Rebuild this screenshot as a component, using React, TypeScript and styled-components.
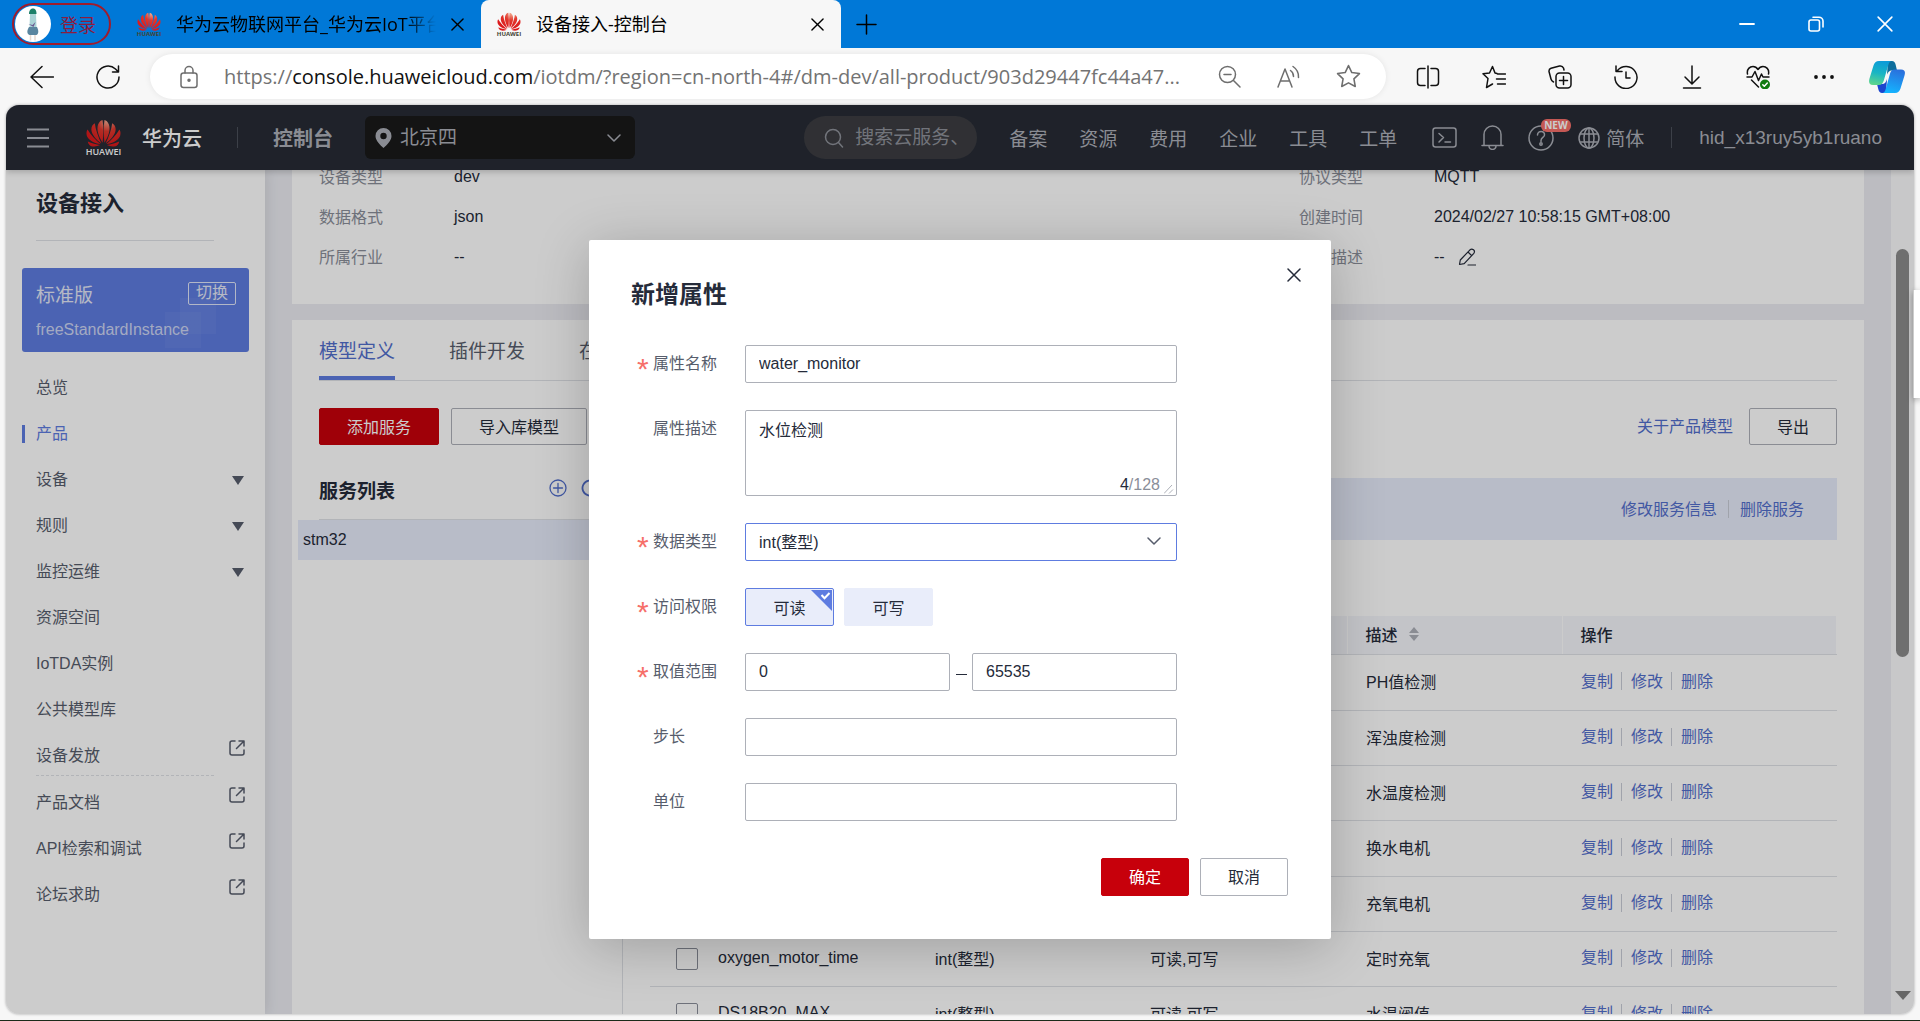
import React, { useState } from "react";
import styled, { createGlobalStyle, css } from "styled-components";

const sans = `"Liberation Sans", "Noto Sans CJK SC", sans-serif`;
const chrome = `"Open Sans", "Noto Sans CJK SC", sans-serif`;

const Global = createGlobalStyle`
  * { box-sizing: border-box; }
  body { margin: 0; overflow: hidden; font-family: ${sans}; font-size: 16px; color: #252b3a; }
  button, input, select, textarea { font: inherit; color: inherit; margin: 0; }
  button { cursor: pointer; padding: 0; border: 0; background: none; }
  a { text-decoration: none; color: inherit; }
  svg { display: block; flex: none; }
`;

/* ---------- browser window ---------- */

const Window = styled.div`
  height: 100vh;
  display: flex;
  flex-direction: column;
  background: #f7f7f7;
  border-bottom: 1px solid #1c2b1a;
  position: relative;
`;

const TabStrip = styled.div`
  height: 48px;
  flex: none;
  display: flex;
  align-items: center;
  padding: 0 27px 0 12px;
  background: #0078d7;
  font-family: ${chrome};
  font-size: 18px;
  color: #000;
`;

const SignIn = styled.button`
  width: 99px;
  height: 42px;
  margin-right: 10px;
  display: flex;
  align-items: center;
  gap: 9px;
  padding-left: 1px;
  border: 2px solid #a01c2c;
  border-radius: 21px;
  color: #8e1b3c;
`;

const Tab = styled.div<{ $active?: boolean }>`
  width: 360px;
  height: 48px;
  display: flex;
  align-items: center;
  gap: 15px;
  padding: 0 17px 0 16px;
  border-radius: 8px 8px 0 0;
  ${(p) => p.$active && css`background: #f7f7f7;`}
`;

const TabTitle = styled.span<{ $fade?: boolean }>`
  flex: 1;
  overflow: hidden;
  white-space: nowrap;
  line-height: 24px;
  ${(p) => p.$fade && css`mask-image: linear-gradient(90deg, #000 88%, transparent);`}
`;

const PlainButton = styled.button`
  display: flex;
  align-items: center;
  justify-content: center;
`;

const WindowButtons = styled.div`
  margin-left: auto;
  display: flex;
  align-items: center;
  gap: 53px;
  color: #fff;
`;

const NewTab = styled(PlainButton)`
  margin-left: 15px;
`;

const Toolbar = styled.div`
  height: 57px;
  flex: none;
  display: flex;
  align-items: center;
  padding: 0 15px 0 30px;
  gap: 42px;
  color: #111;
`;

const AddressBar = styled.div`
  flex: 1;
  min-width: 0;
  height: 45px;
  margin: 0 -12px;
  display: flex;
  align-items: center;
  gap: 35px;
  padding: 0 25px 0 30px;
  border-radius: 23px;
  background: #fff;
  box-shadow: 0 0 6px rgba(0, 0, 0, 0.08);
  color: #6e6e6e;
`;

const Url = styled.div`
  flex: 1;
  min-width: 0;
  margin-left: -9px;
  overflow: hidden;
  white-space: nowrap;
  font-family: ${chrome};
  font-size: 20px;
  line-height: 28px;
  color: #737373;
  b { font-weight: 400; color: #111; }
`;

const ToolIcons = styled.div`
  display: flex;
  align-items: center;
  gap: 42px;
`;

const Copilot = styled(PlainButton)`
  margin-left: -9px;
`;

const Frame = styled.div`
  flex: 1;
  min-height: 0;
  margin: 0 6px 6px;
  display: flex;
  flex-direction: column;
  position: relative;
  overflow: hidden;
  border-radius: 13px;
  background: #ebecf2;
  box-shadow: 0 0 3px rgba(0, 0, 0, 0.35);
`;

const EdgePanel = styled.div`
  position: absolute;
  right: 0;
  top: 290px;
  width: 7px;
  height: 108px;
  background: #fff;
  box-shadow: 0 2px 6px rgba(0, 0, 0, 0.35);
`;

/* ---------- console header ---------- */

const Header = styled.header`
  height: 65px;
  flex: none;
  display: flex;
  align-items: center;
  padding: 0 32px 0 21px;
  background: #272b35;
  color: #adb0b8;
  font-size: 19px;
  white-space: nowrap;
  z-index: 1;
  box-shadow: 0 2px 6px rgba(0, 0, 0, 0.2);
`;

const Brand = styled.a`
  display: flex;
  align-items: center;
  gap: 21px;
  margin-left: 37px;
  color: #fff;
  font-size: 20px;
  font-weight: 500;
`;

const LogoBox = styled.span`
  width: 35px;
  display: flex;
  flex-direction: column;
  align-items: center;
  font: 600 9px/10px "Open Sans", sans-serif;
`;

const Rule = styled.i<{ $gap: number }>`
  width: 1px;
  height: 21px;
  margin: 0 ${(p) => p.$gap}px;
  background: #4c505b;
`;

const ConsoleLink = styled.a`
  font-size: 20px;
  font-weight: 700;
`;

const Region = styled.label`
  position: relative;
  width: 270px;
  height: 43px;
  margin-left: 32px;
  display: flex;
  align-items: center;
  gap: 8px;
  padding: 0 14px 0 10px;
  border-radius: 6px;
  background: #191919;
  select {
    flex: 1;
    appearance: none;
    border: 0;
    outline: 0;
    padding: 0;
    background: transparent;
  }
`;

const Search = styled.label`
  width: 173px;
  height: 43px;
  margin-left: auto;
  display: flex;
  align-items: center;
  gap: 11px;
  padding: 0 20px;
  border-radius: 22px;
  background: #3c3d42;
  color: #8f929a;
  input {
    width: 104px;
    border: 0;
    padding: 0;
    outline: 0;
    background: transparent;
  }
  input::placeholder { color: #8f929a; opacity: 1; }
`;

const TopNav = styled.nav`
  display: flex;
  gap: 32px;
  margin: 0 35px 0 32px;
`;

const HeaderIcons = styled.div`
  display: flex;
  align-items: center;
  gap: 24px;
`;

const Help = styled(PlainButton)`
  position: relative;
`;

const NewBadge = styled.span`
  position: absolute;
  left: 13px;
  top: -6px;
  padding: 0 3px;
  border-radius: 6px;
  background: #f66f6a;
  color: #fff;
  font: 700 10px/13px "Open Sans", sans-serif;
`;

const Lang = styled.button`
  display: flex;
  align-items: center;
  gap: 6px;
`;

/* ---------- console body ---------- */

const Body = styled.div`
  flex: 1;
  min-height: 0;
  display: flex;
`;

const Sidebar = styled.aside`
  width: 259px;
  flex: none;
  padding: 18px 16px 0;
  background: #fff;
  box-shadow: 0 0 14px rgba(0, 0, 0, 0.12);
`;

const SideTitle = styled.h1`
  margin: 0 35px 27px 14px;
  padding-bottom: 20px;
  border-bottom: 1px solid #dfe1e6;
  font-size: 22px;
  line-height: 32px;
  font-weight: 700;
`;

const Instance = styled.section`
  height: 84px;
  padding: 11px 13px 0 14px;
  border-radius: 3px;
  background:
    linear-gradient(rgba(255, 255, 255, 0.04), rgba(255, 255, 255, 0.04)) 158px 30px / 36px 36px no-repeat,
    linear-gradient(rgba(255, 255, 255, 0.04), rgba(255, 255, 255, 0.04)) 143px 44px / 36px 36px no-repeat,
    #5e7ce0;
  color: #e4e8f7;
`;

const InstanceTop = styled.div`
  display: flex;
  justify-content: space-between;
  align-items: center;
  height: 28px;
  margin-bottom: 11px;
  font-size: 19px;
  button {
    width: 48px;
    height: 23px;
    border: 1px solid #dfe5f9;
    border-radius: 2px;
    font-size: 16px;
    line-height: 20px;
  }
`;

const InstanceName = styled.div`
  line-height: 24px;
  color: #cdd5f3;
`;

const Menu = styled.nav`
  margin-top: 13px;
`;

const MenuItem = styled.a<{ $active?: boolean }>`
  height: 46px;
  display: flex;
  align-items: center;
  justify-content: space-between;
  padding-right: 4px;
  color: ${(p) => (p.$active ? "#5e7ce0" : "#575d6c")};
  span {
    padding-left: 11px;
    border-left: 3px solid ${(p) => (p.$active ? "#5e7ce0" : "transparent")};
    line-height: 18px;
  }
`;

const ExternalMark = styled.i`
  padding-bottom: 17px;
`;

const Caret = styled.i`
  margin-right: 1px;
  border: solid transparent;
  border-width: 9px 6px 0;
  border-top-color: #575d6c;
`;

const MenuBreak = styled.hr`
  margin: -4px 35px 4px 14px;
  border: 0;
  border-top: 1px dashed #dfe1e6;
`;

const Main = styled.main`
  flex: 1;
  min-width: 0;
  display: flex;
  flex-direction: column;
  gap: 16px;
  padding: 0 27px;
  overflow: hidden;
`;

const Card = styled.section`
  flex: none;
  padding: 0 27px;
  background: #fff;
`;

const Facts = styled(Card).attrs({ as: "dl" })`
  margin: -13px 0 0;
  padding-bottom: 27px;
  display: grid;
  grid-template-columns: 135px 845px 135px 1fr;
  grid-auto-rows: 40px;
  align-items: center;
  dt { padding-bottom: 2px; color: #8a8e99; }
  dd { margin: 0; display: flex; align-items: center; gap: 13px; }
`;

const ModelTabs = styled.div`
  height: 61px;
  display: flex;
  gap: 54px;
  border-bottom: 1px solid #dfe1e6;
`;

const ModelTab = styled.button<{ $active?: boolean }>`
  border-bottom: 4px solid ${(p) => (p.$active ? "#5e7ce0" : "transparent")};
  padding-top: 8px;
  font-size: 19px;
  line-height: 28px;
  color: ${(p) => (p.$active ? "#526ecc" : "#575d6c")};
`;

const Button = styled.button<{ $primary?: boolean }>`
  height: 37px;
  padding: 0 27px 2px;
  border: 1px solid ${(p) => (p.$primary ? "#c7000b" : "#adb0b8")};
  border-radius: 2px;
  background: ${(p) => (p.$primary ? "#c7000b" : "transparent")};
  color: ${(p) => (p.$primary ? "#fff" : "#252b3a")};
`;

const ModelActions = styled.div`
  display: flex;
  align-items: center;
  gap: 12px;
  margin: 27px 0 33px;
`;

const Link = styled.a`
  padding-bottom: 3px;
  color: #526ecc;
`;

const DocLink = styled(Link)`
  margin: 0 4px 0 auto;
`;

const Split = styled.div`
  display: flex;
`;

const Services = styled.div`
  width: 304px;
  flex: none;
  border-right: 1px solid #dfe1e6;
`;

const ServicesHead = styled.div`
  height: 42px;
  display: flex;
  align-items: flex-start;
  gap: 14px;
  padding: 1px 23px 0 0;
  border-bottom: 1px solid #dfe1e6;
  color: #526ecc;
  h2 {
    flex: 1;
    margin: 0;
    color: #252b3a;
    font-size: 19px;
    line-height: 26px;
    font-weight: 700;
  }
`;

const ServiceRow = styled.button`
  display: block;
  width: 325px;
  height: 40px;
  margin-left: -21px;
  padding-left: 5px;
  background: #e7ebfa;
  text-align: left;
`;

const Detail = styled.div`
  flex: 1;
  min-width: 0;
  padding-left: 27px;
`;

const ServiceBand = styled.div`
  height: 62px;
  display: flex;
  align-items: center;
  justify-content: flex-end;
  gap: 11px;
  padding-right: 33px;
  background: #e7ebfa;
`;

const Bar = styled.i`
  width: 1px;
  height: 18px;
  background: #c9ccd6;
`;

const Properties = styled.table`
  width: 100%;
  margin-top: 76px;
  table-layout: fixed;
  border-collapse: collapse;
  text-align: left;
  col:nth-child(1) { width: 50px; }
  col:nth-child(2) { width: 217px; }
  col:nth-child(3), col:nth-child(4), col:nth-child(5) { width: 215px; }
  th, td { height: 55px; padding: 0 18px 2px; border-bottom: 1px solid #dfe1e6; font-weight: 400; }
  th { height: 38px; background: #f4f5fb; font-weight: 500; border-right: 1px solid #fff; }
  td:first-child { padding: 0 0 0 26px; }
  td:nth-child(n + 5) { padding-left: 19px; }
  tbody tr:nth-child(3n + 1) td { height: 56px; }
`;

const Check = styled.input`
  display: block;
  appearance: none;
  width: 22px;
  height: 22px;
  margin: 0;
  border: 1px solid #8a8e99;
  border-radius: 2px;
`;

const Sortable = styled.span`
  display: flex;
  align-items: center;
  gap: 11px;
`;

const Ops = styled.div`
  display: flex;
  align-items: center;
  gap: 8px;
  ${Bar} { margin: 0 1px 0 0; }
`;

const Track = styled.div`
  width: 23px;
  flex: none;
  display: flex;
  flex-direction: column;
  align-items: center;
  padding: 79px 0 14px;
  background: #fbfbfc;
`;

const Thumb = styled.div`
  width: 13px;
  flex: 0 0 408px;
  border-radius: 7px;
  background: #8b8b8b;
`;

const TrackArrow = styled.i`
  margin-top: auto;
  border: solid transparent;
  border-width: 9px 8px 0;
  border-top-color: #808080;
`;

/* ---------- dialog ---------- */

const Overlay = styled.div`
  position: absolute;
  inset: 0;
  z-index: 2;
  padding-top: 135px;
  background: rgba(0, 0, 0, 0.2);
`;

const Dialog = styled.div`
  width: 742px;
  margin: 0 auto;
  padding: 28px 43px 43px 42px;
  border-radius: 2px;
  background: #fff;
  box-shadow: 0 8px 54px rgba(0, 0, 0, 0.22);
`;

const DialogHead = styled.div`
  display: flex;
  justify-content: space-between;
  align-items: flex-start;
  height: 77px;
  h2 {
    margin: 12px 0 0;
    font-size: 24px;
    line-height: 30px;
    font-weight: 700;
  }
  button { margin-right: -13px; }
`;

const Form = styled.form`
  display: flex;
  flex-direction: column;
  gap: 27px;
  padding-left: 6px;
`;

const FieldRow = styled.div`
  display: grid;
  grid-template-columns: 16px 92px 432px;
`;

const Star = styled.span`
  color: #f66f6a;
  font: 400 30px/48px "Liberation Sans", sans-serif;
  height: 38px;
`;

const FieldLabel = styled.label`
  grid-column: 2;
  line-height: 38px;
  color: #575d6c;
`;

const box = css`
  border: 1px solid #adb0b8;
  border-radius: 2px;
  background: #fff;
  outline: 0;
  padding: 0 13px;
`;

const TextBox = styled.input`
  ${box}
  width: 100%;
  min-width: 0;
  height: 38px;
`;

const AreaWrap = styled.div`
  position: relative;
  height: 86px;
`;

const Area = styled.textarea`
  ${box}
  display: block;
  width: 100%;
  height: 86px;
  padding: 8px 13px;
  line-height: 24px;
  resize: none;
`;

const Counter = styled.span`
  position: absolute;
  right: 17px;
  bottom: 0;
  line-height: 22px;
  color: #8a8e99;
  b { font-weight: 400; color: #252b3a; }
`;

const Grip = styled.svg`
  position: absolute;
  right: 3px;
  bottom: 2px;
`;

const SelectWrap = styled.div`
  position: relative;
  svg { position: absolute; right: 16px; top: 14px; pointer-events: none; color: #575d6c; }
`;

const Select = styled.select`
  ${box}
  appearance: none;
  width: 100%;
  height: 38px;
  border-color: #5e7ce0;
`;

const Chips = styled.div`
  display: flex;
  gap: 10px;
`;

const Chip = styled.label`
  position: relative;
  width: 89px;
  height: 38px;
  display: flex;
  align-items: center;
  justify-content: center;
  border: 1px solid #e9edfa;
  border-radius: 2px;
  background: #e9edfa;
  input { position: absolute; inset: 0; width: 100%; height: 100%; opacity: 0; }
  svg { position: absolute; right: 1px; top: 1px; display: none; }
  &:has(input:checked) { border-color: #5e7ce0; }
  &:has(input:checked) svg { display: block; }
`;

const RangeRow = styled.div`
  display: grid;
  grid-template-columns: 1fr 22px 1fr;
  align-items: center;
  i { justify-self: center; width: 11px; height: 1px; margin-top: 5px; background: #252b3a; }
`;

const DialogFoot = styled.div`
  display: flex;
  justify-content: flex-end;
  gap: 11px;
  margin-top: 37px;
  button { height: 38px; }
`;

/* ---------- drawings ---------- */

type IconProps = { w: number; h?: number; box?: string; sw?: number; children: React.ReactNode };
const Icon = ({ w, h = w, box: vb = "0 0 24 24", sw = 1.5, children }: IconProps) => (
  <svg width={w} height={h} viewBox={vb} fill="none" stroke="currentColor" strokeWidth={sw} strokeLinecap="round" strokeLinejoin="round" aria-hidden>
    {children}
  </svg>
);

const petals = [
  "M17 24.5C13 18 10.5 11 12.4 5.6 13.400 2.800 15.400 1.200 17 1 18.200 8 18 16 17 24.500Z",
  "M19 24.500C23 18 25.500 11 23.600 5.600 22.600 2.800 20.600 1.200 19 1 17.800 8 18 16 19 24.500Z",
  "M15.800 25C10.500 21.500 5.500 16 5.400 10.500 5.400 7.500 7 5.300 9 4.300 9.800 11 12.500 18.500 15.800 25Z",
  "M20.200 25C25.500 21.500 30.500 16 30.600 10.500 30.600 7.500 29 5.300 27 4.300 26.200 11 23.500 18.500 20.200 25Z",
  "M15 26C9 25.300 2.500 22 .8 17.500 0 15 .4 12.500 1.500 11 5 17 10 22 15 26Z",
  "M21 26C27 25.300 33.500 22 35.200 17.500 36 15 35.600 12.500 34.500 11 31 17 26 22 21 26Z",
  "M14.600 27C10.500 29 5.500 29 3.500 26.800 2.400 25.700 1.800 24.500 1.800 23.300 6 25.300 10.500 26.600 14.600 27Z",
  "M21.400 27C25.500 29 30.500 29 32.500 26.800 33.600 25.700 34.200 24.500 34.200 23.300 30 25.300 25.500 26.600 21.400 27Z",
];

const Flower = ({ w, h, id }: { w: number; h: number; id: string }) => (
  <svg width={w} height={h} viewBox="0 0 36 29" aria-hidden>
    <defs>
      <radialGradient id={id} gradientUnits="userSpaceOnUse" cx="22" cy="2" r="24">
        <stop offset="0" stopColor="#f3b095" />
        <stop offset="0.450" stopColor="#e2392e" />
        <stop offset="1" stopColor="#dc1a1c" />
      </radialGradient>
    </defs>
    {petals.map((d) => (
      <path key={d} d={d} fill={`url(#${id})`} />
    ))}
  </svg>
);

const FavBox = styled.span`
  width: 24px;
  display: flex;
  flex-direction: column;
  align-items: center;
  font: 700 6px/6px "Open Sans", sans-serif;
  color: #443;
`;

const Favicon = ({ id }: { id: string }) => (
  <FavBox>
    <Flower w={24} h={19} id={id} />
    HUAWEI
  </FavBox>
);

const Avatar = () => (
  <svg width="36" height="36" viewBox="0 0 36 36" aria-hidden>
    <circle cx="18" cy="18" r="18" fill="#fff" />
    <path d="M14 8c0-4 2-5.500 4-5.500S21.500 4 21.500 8z" fill="#1d8069" />
    <path d="M15 8h6l.5 13h-7z" fill="#a9d3d6" />
    <path d="M13.500 18l4 1 3-3-2 5z" fill="#6b5a92" />
    <path d="M14 21h8c2 4 1.500 7-.5 8h-7c-2.500-1-3-4-.5-8z" fill="#5a86a0" />
    <path d="M15.500 29v5.500M20 29v5.500" stroke="#e8d9cf" strokeWidth="1.500" />
  </svg>
);

const Cross = ({ size, sw = 1.5 }: { size: number; sw?: number }) => (
  <Icon w={size} box="0 0 14 14" sw={sw}><path d="M1 1l12 12M13 1L1 13" /></Icon>
);

const Chevron = () => <Icon w={14} h={8} box="0 0 14 8" sw={1.5}><path d="M1 1l6 6 6-6" /></Icon>;

const External = () => (
  <Icon w={16} box="0 0 16 16" sw={1.5}>
    <path d="M6 1H3a2 2 0 0 0-2 2v10a2 2 0 0 0 2 2h10a2 2 0 0 0 2-2v-3M10 1h5v5M15 1L7.500 8.500" />
  </Icon>
);

const star = "M12 1.500l3.200 6.700 7.300 1-5.300 5.100 1.300 7.300L12 18.100l-6.500 3.500 1.300-7.300L1.500 9.200l7.300-1z";

const CopilotMark = () => (
  <svg width="36" height="32" viewBox="0 0 36 32" aria-hidden>
    <defs>
      <linearGradient id="cpA" x1="0.500" y1="0" x2="0.300" y2="1">
        <stop offset="0" stopColor="#0c9bd8" /><stop offset="0.500" stopColor="#19b5c4" /><stop offset="1" stopColor="#5fd68c" />
      </linearGradient>
      <linearGradient id="cpB" x1="0.700" y1="0" x2="0.400" y2="1">
        <stop offset="0" stopColor="#2a6fdc" /><stop offset="1" stopColor="#14b4ff" />
      </linearGradient>
    </defs>
    <path d="M19 0h4c2 0 3 1.500 3.600 3.500L28 9.500h-5c-3 0-4 2-5 4z" fill="#0d6d9c" />
    <path d="M17 32h-4c-2 0-3-1.500-3.600-3.500L8 23h5c3 0 4-2 5-5z" fill="#1b45cf" />
    <path d="M10 0h13c-2 0-3 1.500-3.700 4l-4.500 15.500C14 22 12.500 24 10 24H4c-4 0-4.500-3-3.500-6.500l4-13C5.300 2 7 0 10 0z" fill="url(#cpA)" />
    <path d="M26 32H13c2 0 3-1.500 3.700-4l4.500-16c.8-2.500 2.300-3.500 4.800-3.500h6c4 0 4.500 2.500 3.500 6l-4 13C30.700 30 29 32 26 32z" fill="url(#cpB)" />
  </svg>
);

/* ---------- data ---------- */

type Item = { text: string; kind?: "sub" | "ext"; active?: boolean };
const menu: Item[] = [
  { text: "总览" },
  { text: "产品", active: true },
  { text: "设备", kind: "sub" },
  { text: "规则", kind: "sub" },
  { text: "监控运维", kind: "sub" },
  { text: "资源空间" },
  { text: "IoTDA实例" },
  { text: "公共模型库" },
  { text: "设备发放", kind: "ext" },
];
const links: Item[] = [
  { text: "产品文档", kind: "ext" },
  { text: "API检索和调试", kind: "ext" },
  { text: "论坛求助", kind: "ext" },
];

const rows = [
  ["PH", "PH值检测"],
  ["turbidity", "浑浊度检测"],
  ["DS18B20", "水温度检测"],
  ["water_motor", "换水电机"],
  ["oxygen_motor", "充氧电机"],
  ["oxygen_motor_time", "定时充氧"],
  ["DS18B20_MAX", "水温阀值"],
];

const MenuList = ({ items }: { items: Item[] }) => (
  <>
    {items.map((m) => (
      <MenuItem key={m.text} href="#" $active={m.active}>
        <span>{m.text}</span>
        {m.kind === "sub" && <Caret />}
        {m.kind === "ext" && <ExternalMark><External /></ExternalMark>}
      </MenuItem>
    ))}
  </>
);

const BrowserBars = () => (
  <>
    <TabStrip>
      <SignIn><Avatar />登录</SignIn>
      <Tab>
        <Favicon id="favA" />
        <TabTitle $fade>华为云物联网平台_华为云IoT平台</TabTitle>
        <PlainButton aria-label="关闭标签页"><Cross size={13} /></PlainButton>
      </Tab>
      <Tab $active>
        <Favicon id="favB" />
        <TabTitle>设备接入-控制台</TabTitle>
        <PlainButton aria-label="关闭标签页"><Cross size={13} /></PlainButton>
      </Tab>
      <NewTab aria-label="新建标签页"><Icon w={21} box="0 0 21 21"><path d="M10.500 1v19M1 10.500h19" /></Icon></NewTab>
      <WindowButtons>
        <PlainButton aria-label="最小化"><Icon w={16} box="0 0 16 16" sw={1.8}><path d="M1 8h14" /></Icon></PlainButton>
        <PlainButton aria-label="还原"><Icon w={16} box="0 0 16 16" sw={1.6}><rect x="1" y="4" width="10.500" height="11" rx="2" /><path d="M5 1.200h6A4 4 0 0 1 15 5v6" /></Icon></PlainButton>
        <PlainButton aria-label="关闭"><Cross size={16} sw={1.4} /></PlainButton>
      </WindowButtons>
    </TabStrip>
    <Toolbar>
      <PlainButton aria-label="后退"><Icon w={24}><path d="M23.500 12H1M12 1.500L1 12l11 10.500" /></Icon></PlainButton>
      <PlainButton aria-label="刷新"><Icon w={24}><path d="M23 12A11 11 0 1 1 19.500 4l2.500 2.500M22.500 1v6h-6" /></Icon></PlainButton>
      <AddressBar>
        <Icon w={18} h={24} box="0 0 18 24"><rect x="1" y="8" width="16" height="14.500" rx="2.500" /><path d="M5 8V5.500a4 4 0 0 1 8 0V8" /><circle cx="9" cy="15.200" r="1" fill="currentColor" /></Icon>
        <Url role="textbox" aria-label="地址" tabIndex={0}>
          https://<b>console.huaweicloud.com</b>/iotdm/?region=cn-north-4#/dm-dev/all-product/903d29447fc44a47...
        </Url>
        <PlainButton aria-label="缩小"><Icon w={24}><circle cx="9.500" cy="9.500" r="8" /><path d="M15.500 15.500L22 22M6 9.500h7" /></Icon></PlainButton>
        <PlainButton aria-label="朗读"><Icon w={24}><path d="M1 22L8 4l7 18M3.500 16h9M13.500 5.500q3 2 3 6M16 1.500q6 4 5.500 11" /></Icon></PlainButton>
        <PlainButton aria-label="收藏"><Icon w={25}><path d={star} /></Icon></PlainButton>
      </AddressBar>
      <ToolIcons>
        <PlainButton aria-label="分屏"><Icon w={24}><path d="M12 1v22M9 3.500H4.500A3 3 0 0 0 1.500 6.500v11a3 3 0 0 0 3 3H9M15 3.500h4.500a3 3 0 0 1 3 3v11a3 3 0 0 1-3 3H15" /></Icon></PlainButton>
        <PlainButton aria-label="收藏夹"><Icon w={24}><path d="M15 8.500l-2-.5-2.500-6.500L7.500 8l-6.500.8 5 4.700L4.500 22.500l6-3.500M15.500 9h8M14.500 14h9M15.500 19h8" /></Icon></PlainButton>
        <PlainButton aria-label="集锦"><Icon w={24}><rect x="8" y="8" width="15" height="15" rx="3.500" /><path d="M15.500 11.500v8M11.500 15.500h8M5.500 17Q3.500 16 3 14L1 6.500Q.8 4 3 3.200L11.500 1q3-.5 4 2l.5 2" /></Icon></PlainButton>
        <PlainButton aria-label="历史记录"><Icon w={24}><path d="M3.500 5.500A11 11 0 1 1 1 12M2 1v5.500h6M12 7v6h4" /></Icon></PlainButton>
        <PlainButton aria-label="下载"><Icon w={24}><path d="M12 1v17M5 12l7 7 7-7M3.500 23h17" /></Icon></PlainButton>
        <PlainButton aria-label="浏览器概要">
          <Icon w={24}><path d="M1.500 9C.5 4 4 1.500 7 1.500q3 0 5 3 2-3 5-3c3 0 6.500 2.500 5.500 7.500M1 12h5l3-5.500 3.500 9L15.500 9l1.500 3h6M5.500 15l7 7" /><circle cx="19" cy="19.500" r="5" fill="#107c10" stroke="none" /><path d="M16.800 19.700l1.500 1.500 3-3.200" stroke="#fff" /></Icon>
        </PlainButton>
        <PlainButton aria-label="设置及其他"><Icon w={24}><g fill="currentColor" stroke="none"><circle cx="4" cy="12" r="1.900" /><circle cx="12" cy="12" r="1.900" /><circle cx="20" cy="12" r="1.900" /></g></Icon></PlainButton>
        <Copilot aria-label="Copilot"><CopilotMark /></Copilot>
      </ToolIcons>
    </Toolbar>
  </>
);

const ConsoleHeader = () => (
  <Header>
    <PlainButton aria-label="服务列表"><Icon w={22} h={20} box="0 0 22 20" sw={2}><path d="M0 1.500h22M0 10h22M0 18.500h22" /></Icon></PlainButton>
    <Brand href="#">
      <LogoBox><Flower w={35} h={28} id="brand" />HUAWEI</LogoBox>
      华为云
    </Brand>
    <Rule $gap={35} />
    <ConsoleLink href="#">控制台</ConsoleLink>
    <Region>
      <svg width="17" height="20" viewBox="0 0 17 20" aria-hidden><path fill="currentColor" fillRule="evenodd" d="M8.500 0A8 8 0 0 1 16.500 8c0 4.500-4.500 9-8 12C5 17 .5 12.500.5 8A8 8 0 0 1 8.500 0zm0 4.800a3.200 3.200 0 1 0 0 6.400 3.200 3.200 0 0 0 0-6.400z" /></svg>
      <select aria-label="区域"><option>北京四</option></select>
      <Chevron />
    </Region>
    <Search>
      <Icon w={20} box="0 0 20 20"><circle cx="9" cy="9" r="7.500" /><path d="M14.500 14.500L18.500 19" /></Icon>
      <input aria-label="搜索" placeholder="搜索云服务、" />
    </Search>
    <TopNav>
      {["备案", "资源", "费用", "企业", "工具", "工单"].map((t) => <a key={t} href="#">{t}</a>)}
    </TopNav>
    <HeaderIcons>
      <PlainButton aria-label="CloudShell"><Icon w={25} h={21} box="0 0 25 21"><rect x="1" y="1" width="23" height="19" rx="2.500" /><path d="M7 6.500l4.500 4L7 15M13 15h5.500" /></Icon></PlainButton>
      <PlainButton aria-label="消息"><Icon w={23} h={25} box="0 0 23 25"><path d="M1 20.500h21M3 20.500V9.500a8.500 8.500 0 0 1 17 0v11M8 21a3.500 3.500 0 0 0 7 0" /></Icon></PlainButton>
      <Help aria-label="帮助">
        <Icon w={26} box="0 0 26 26"><circle cx="13" cy="13" r="12" /><path d="M9.500 10c0-5 7.500-4.500 7 0-.3 2.500-3.500 2.500-3.500 5.500v1" /><circle cx="13" cy="19" r="1.200" /></Icon>
        <NewBadge>NEW</NewBadge>
      </Help>
      <Lang>
        <Icon w={22} box="0 0 22 22"><circle cx="11" cy="11" r="10" /><ellipse cx="11" cy="11" rx="5" ry="10" /><path d="M11 1v20M2.500 7h17M2.500 15h17" /></Icon>
        简体
      </Lang>
    </HeaderIcons>
    <Rule $gap={27} />
    <a href="#">hid_x13ruy5yb1ruano</a>
  </Header>
);

const PropertyDialog = () => {
  const [name, setName] = useState("water_monitor");
  const [desc, setDesc] = useState("水位检测");
  return (
    <Overlay>
      <Dialog role="dialog" aria-labelledby="dlg-title">
        <DialogHead>
          <h2 id="dlg-title">新增属性</h2>
          <PlainButton aria-label="关闭"><Cross size={14} /></PlainButton>
        </DialogHead>
        <Form>
          <FieldRow>
            <Star>*</Star>
            <FieldLabel htmlFor="name">属性名称</FieldLabel>
            <TextBox id="name" value={name} onChange={(e) => setName(e.target.value)} />
          </FieldRow>
          <FieldRow>
            <FieldLabel htmlFor="desc">属性描述</FieldLabel>
            <AreaWrap>
              <Area id="desc" value={desc} maxLength={128} onChange={(e) => setDesc(e.target.value)} />
              <Counter><b>{desc.length}</b>/128</Counter>
              <Grip width="10" height="10" viewBox="0 0 10 10" stroke="#adb0b8"><path d="M0 9.500L8 1M5 9.500l4-4" /></Grip>
            </AreaWrap>
          </FieldRow>
          <FieldRow>
            <Star>*</Star>
            <FieldLabel htmlFor="type">数据类型</FieldLabel>
            <SelectWrap>
              <Select id="type"><option>int(整型)</option></Select>
              <Chevron />
            </SelectWrap>
          </FieldRow>
          <FieldRow>
            <Star>*</Star>
            <FieldLabel as="span">访问权限</FieldLabel>
            <Chips>
              {["可读", "可写"].map((t, i) => (
                <Chip key={t}>
                  <input type="checkbox" defaultChecked={i === 0} />
                  {t}
                  <svg width="21" height="21" viewBox="0 0 21 21" aria-hidden><path d="M0 0h21v21z" fill="#5e7ce0" /><path d="M10.500 5l3 3.200L18.500 3" fill="none" stroke="#fff" strokeWidth="2" /></svg>
                </Chip>
              ))}
            </Chips>
          </FieldRow>
          <FieldRow>
            <Star>*</Star>
            <FieldLabel htmlFor="min">取值范围</FieldLabel>
            <RangeRow>
              <TextBox id="min" defaultValue="0" />
              <i />
              <TextBox aria-label="最大值" defaultValue="65535" />
            </RangeRow>
          </FieldRow>
          <FieldRow>
            <FieldLabel htmlFor="step">步长</FieldLabel>
            <TextBox id="step" />
          </FieldRow>
          <FieldRow>
            <FieldLabel htmlFor="unit">单位</FieldLabel>
            <TextBox id="unit" />
          </FieldRow>
        </Form>
        <DialogFoot>
          <Button $primary>确定</Button>
          <Button>取消</Button>
        </DialogFoot>
      </Dialog>
    </Overlay>
  );
};

export default function App() {
  return (
    <Window>
      <Global />
      <BrowserBars />
      <Frame>
        <ConsoleHeader />
        <Body>
          <Sidebar>
            <SideTitle>设备接入</SideTitle>
            <Instance>
              <InstanceTop>标准版<button>切换</button></InstanceTop>
              <InstanceName>freeStandardInstance</InstanceName>
            </Instance>
            <Menu>
              <MenuList items={menu} />
              <MenuBreak />
              <MenuList items={links} />
            </Menu>
          </Sidebar>
          <Main>
            <Facts>
              <dt>设备类型</dt><dd>dev</dd>
              <dt>协议类型</dt><dd>MQTT</dd>
              <dt>数据格式</dt><dd>json</dd>
              <dt>创建时间</dt><dd>2024/02/27 10:58:15 GMT+08:00</dd>
              <dt>所属行业</dt><dd>--</dd>
              <dt>产品描述</dt>
              <dd>
                --
                <PlainButton aria-label="编辑描述"><Icon w={18} box="0 0 18 18" sw={1.2}><path d="M1.500 16.500l.8-4.500L12 1.800q1.700-1.500 3.500 0t.3 3.600L6.200 15.600zM10 4l3.700 3.700M10 17h7.500" /></Icon></PlainButton>
              </dd>
            </Facts>
            <Card>
              <ModelTabs>
                <ModelTab $active>模型定义</ModelTab>
                <ModelTab>插件开发</ModelTab>
                <ModelTab>在线调试</ModelTab>
              </ModelTabs>
              <ModelActions>
                <Button $primary>添加服务</Button>
                <Button>导入库模型</Button>
                <DocLink href="#">关于产品模型</DocLink>
                <Button>导出</Button>
              </ModelActions>
              <Split>
                <Services>
                  <ServicesHead>
                    <h2>服务列表</h2>
                    <PlainButton aria-label="添加"><Icon w={18} box="0 0 18 18" sw={1.3}><circle cx="9" cy="9" r="8" /><path d="M9 4.500v9M4.500 9h9" /></Icon></PlainButton>
                    <PlainButton aria-label="刷新"><Icon w={18} box="0 0 18 18" sw={1.8}><path d="M16.500 9A7.500 7.500 0 1 1 14 3.500M16.500 1v4h-4" /></Icon></PlainButton>
                  </ServicesHead>
                  <ServiceRow>stm32</ServiceRow>
                </Services>
                <Detail>
                  <ServiceBand>
                    <Link href="#">修改服务信息</Link><Bar /><Link href="#">删除服务</Link>
                  </ServiceBand>
                  <Properties>
                    <colgroup><col /><col /><col /><col /><col /><col /></colgroup>
                    <thead>
                      <tr>
                        <th /><th>属性名称</th><th>数据类型</th><th>访问方式</th>
                        <th>
                          <Sortable>
                            描述
                            <svg width="10" height="14" viewBox="0 0 10 14" fill="#adb0b8" aria-hidden><path d="M5 0l5 6H0zM5 14l5-6H0z" /></svg>
                          </Sortable>
                        </th>
                        <th>操作</th>
                      </tr>
                    </thead>
                    <tbody>
                      {rows.map(([id, text]) => (
                        <tr key={id}>
                          <td><Check type="checkbox" aria-label={id} /></td>
                          <td>{id}</td>
                          <td>int(整型)</td>
                          <td>可读,可写</td>
                          <td>{text}</td>
                          <td>
                            <Ops>
                              <Link href="#">复制</Link><Bar /><Link href="#">修改</Link><Bar /><Link href="#">删除</Link>
                            </Ops>
                          </td>
                        </tr>
                      ))}
                    </tbody>
                  </Properties>
                </Detail>
              </Split>
            </Card>
          </Main>
          <Track><Thumb /><TrackArrow /></Track>
        </Body>
        <PropertyDialog />
      </Frame>
      <EdgePanel />
    </Window>
  );
}
